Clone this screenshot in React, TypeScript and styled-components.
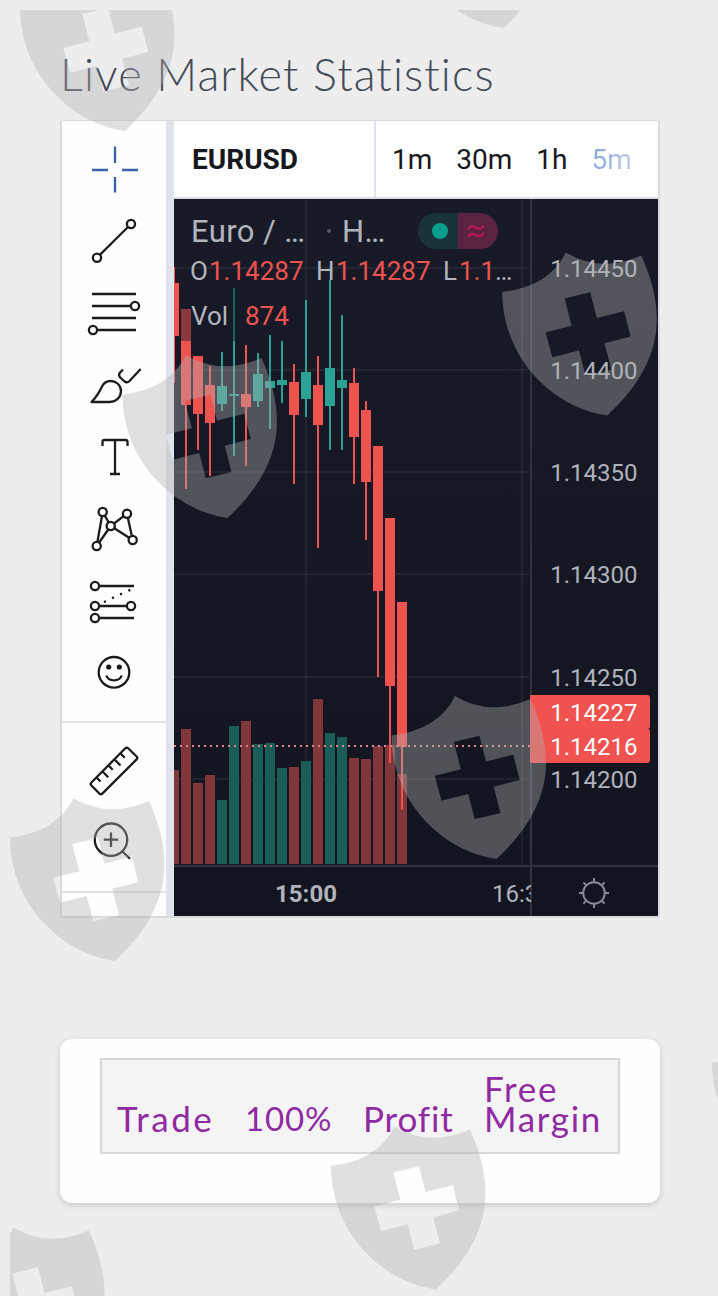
import React from "react";
import styled, { createGlobalStyle } from "styled-components";

const GlobalStyle = createGlobalStyle`
  * { box-sizing: border-box; }
  body {
    margin: 0;
    background: #ededed;
    font-family: Roboto, "Liberation Sans", sans-serif;
    overflow: hidden;
  }
`;

const Page = styled.div`
  position: relative;
  height: 1296px;
  padding: 44px 58px 0 60px;
  overflow: hidden;
`;

const Title = styled.h1`
  margin: 0;
  height: 76px;
  font: 300 45px/60px Lato, "Open Sans", sans-serif;
  letter-spacing: 1.14px;
  color: #444a56;
  white-space: nowrap;
`;

const Widget = styled.section`
  display: flex;
  width: 600px;
  height: 798px;
  border: 2px solid #d9dadc;
  border-top-width: 1.5px;
  border-radius: 3px;
  background: #e0e3eb;
  overflow: hidden;
`;

const Toolbar = styled.nav`
  flex: 0 0 104px;
  margin-right: 8px;
  background: #fefefe;
  display: flex;
  flex-direction: column;
`;

const ToolGroup = styled.div`
  padding: 12px 0 12px 16px;
  border-bottom: 2px solid #e0e2e6;
  display: flex;
  flex-direction: column;
`;

const ToolIcon = styled.svg<{ $active?: boolean }>`
  display: block;
  width: 72px;
  height: 72px;
  fill: none;
  stroke: ${(p) => (p.$active ? "#3a62a8" : "#1b1c20")};
  stroke-width: 2.3;
  stroke-linejoin: round;
`;

const Main = styled.div`
  flex: 1;
  display: flex;
  flex-direction: column;
  background: #fff;
`;

const Header = styled.header`
  display: flex;
  height: 78px;
  border-bottom: 2px solid #dcdee3;
  font-size: 28px;
  line-height: 78px;
  color: #16181e;
`;

const SymbolName = styled.div`
  width: 202px;
  padding-left: 18px;
  border-right: 2px solid #e0e3eb;
  font-weight: 700;
`;

const Intervals = styled.div`
  display: flex;
  gap: 24px;
  padding-left: 16px;
`;

const Interval = styled.span<{ $active?: boolean }>`
  ${(p) =>
    p.$active &&
    `background: linear-gradient(90deg, #86a6da, #c3cbe6);
     background-clip: text;
     -webkit-background-clip: text;
     color: transparent;`}
`;

const ChartArea = styled.div`
  position: relative;
  flex: 1;
  background: linear-gradient(#181b27, #12151f);
`;

const ChartSvg = styled.svg`
  display: block;
  width: 484px;
  height: 718px;
  font-family: Roboto, "Liberation Sans", sans-serif;
  font-size: 24px;
`;

const Legend = styled.div`
  position: absolute;
  left: 16px;
  top: 12px;
  color: #b2b5be;
  white-space: pre;
`;

const InstrumentRow = styled.div`
  display: grid;
  grid-template-columns: 136px 15px 76px 80px;
  align-items: center;
  height: 40px;
  padding-left: 1px;
  font-size: 31px;
  letter-spacing: 0.4px;
`;

const Separator = styled.span`
  width: 4px;
  height: 4px;
  border-radius: 50%;
  background: #555862;
`;

const Status = styled.div`
  display: flex;
  height: 36px;
  border-radius: 18px;
  overflow: hidden;
  background: linear-gradient(90deg, #1a3338 50%, #592440 50%);
`;

const OhlcRow = styled.div`
  display: grid;
  grid-template-columns: 19px 107px 20px 107px 16px 60px;
  height: 38px;
  line-height: 40px;
  font-size: 26px;
`;

const VolumeRow = styled.div`
  display: grid;
  grid-template-columns: 54px 60px;
  margin-top: 7px;
  padding-left: 1px;
  height: 38px;
  line-height: 40px;
  font-size: 26px;
`;

const Down = styled.span`
  color: #ee5350;
`;
const Muted = styled.span`
  color: #b2b5be;
`;

const Card = styled.section`
  width: 600px;
  height: 164px;
  margin-top: 121px;
  padding: 19px 40px;
  border-radius: 12px;
  background: #fefefe;
  box-shadow: 0 2px 6px rgba(0, 0, 0, 0.16);
`;

const StatsHead = styled.div`
  display: grid;
  grid-template-columns: 128px 118px 121px 149px;
  align-items: end;
  height: 96px;
  padding-bottom: 19px;
  border: 2px solid #d8d8d8;
  background: #f4f4f4;
`;

const StatCell = styled.div<{ $spacing?: number; $size?: number }>`
  padding-left: 15px;
  font: 400 ${(p) => p.$size ?? 35}px/30px Lato, "Open Sans", sans-serif;
  letter-spacing: ${(p) => p.$spacing ?? 0}px;
  color: #8f2aa2;
`;

const Watermark = styled.svg`
  position: absolute;
  left: 10px;
  top: 10px;
  width: 708px;
  height: 1286px;
  fill: rgba(177, 177, 177, 0.39);
  fill-rule: evenodd;
  pointer-events: none;
`;

const RED = "#ef5350";
const GREEN = "#2aa294";

// [rising, high, body top, body bottom, low, volume top]
type Candle = [boolean, number, number, number, number, number];
const candles: Candle[] = [
  [false, 267, 283, 336, 383, 770],
  [false, 309, 341, 405, 489, 729],
  [false, 356, 356, 414, 450, 783],
  [false, 366, 385, 423, 476, 775],
  [true, 352, 386, 404, 411, 800],
  [true, 288, 394, 396, 456, 726],
  [false, 345, 394, 407, 466, 721],
  [true, 353, 374, 401, 407, 744],
  [true, 335, 381, 388, 429, 743],
  [true, 341, 380, 385, 403, 768],
  [false, 364, 382, 415, 484, 767],
  [true, 300, 372, 399, 417, 761],
  [false, 356, 385, 425, 548, 699],
  [true, 280, 368, 406, 450, 733],
  [true, 315, 380, 388, 450, 737],
  [false, 368, 383, 437, 484, 758],
  [false, 401, 410, 482, 540, 759],
  [false, 446, 446, 591, 677, 746],
  [false, 518, 518, 686, 763, 745],
  [false, 602, 602, 747, 810, 774],
];

const priceTicks: [string, number][] = [
  ["1.14450", 268],
  ["1.14400", 370],
  ["1.14350", 472],
  ["1.14300", 574],
  ["1.14250", 677],
  ["1.14200", 779],
];

function PriceChart() {
  return (
    <ChartSvg viewBox="174 199 484 718">
      <g fill="rgba(120,124,140,0.13)">
        {priceTicks.map(([, y]) => (
          <rect key={y} x={174} y={y - 1} width={355} height={2} />
        ))}
        <rect x={305} y={199} width={2} height={666} />
        <rect x={521} y={199} width={2} height={666} />
      </g>
      {candles.map(([up, , , , , v], i) => (
        <rect key={i} x={169 + 12 * i} y={v} width={10} height={864 - v} fill={up ? "#1c5c56" : "#80373c"} />
      ))}
      {candles.map(([up, high, top, bottom, low], i) => (
        <g key={i} fill={up ? GREEN : RED}>
          <rect x={173 + 12 * i} y={high} width={2} height={low - high} />
          <rect x={169 + 12 * i} y={top} width={10} height={bottom - top} />
        </g>
      ))}
      <rect x={181} y={309} width={10} height={32} fill="#8c393e" />
      <rect x={233} y={288} width={2} height={53} fill="#1c655f" />
      <path d="M174 746H530" stroke="#e0868a" strokeWidth="2" strokeDasharray="2 4" />
      <g fill="#30333e">
        <rect x={530} y={199} width={2} height={718} />
        <rect x={174} y={865} width={484} height={2} />
      </g>
      <g fill="#b0b3bc">
        {priceTicks.map(([label, y]) => (
          <text key={label} x={637.5} y={y + 9} textAnchor="end">
            {label}
          </text>
        ))}
        <text x={306} y={902} textAnchor="middle" fontWeight={700}>
          15:00
        </text>
        <svg x={480} y={870} width={51} height={44}>
          <text x={12} y={32}>
            16:30
          </text>
        </svg>
      </g>
      <path d="M530 695h117q3 0 3 3v28q0 3-2 3q2 0 2 3v28q0 3-3 3H530z" fill="#f0524f" />
      <g fill="#fff">
        <text x={637.5} y={721} textAnchor="end">
          1.14227
        </text>
        <text x={637.5} y={755} textAnchor="end">
          1.14216
        </text>
      </g>
      <g transform="translate(594 893)" stroke="#868993" strokeWidth="2" fill="none">
        <circle r={10.8} />
        {[0, 45, 90, 135, 180, 225, 270, 315].map((a) => (
          <path key={a} d="M0 -11V-15" transform={`rotate(${a})`} />
        ))}
      </g>
    </ChartSvg>
  );
}

function Knobs({ at }: { at: [number, number][] }) {
  return (
    <>
      {at.map(([x, y]) => (
        <circle key={`${x}-${y}`} cx={x} cy={y} r={4.1} fill="#fefefe" />
      ))}
    </>
  );
}

function DrawingTools() {
  return (
    <Toolbar>
      <ToolGroup>
        <ToolIcon $active viewBox="0 0 72 72">
          <path d="M37 13.5V30M37 44V59.5M14 37H30M44 37H60" />
        </ToolIcon>
        <ToolIcon viewBox="0 0 72 72">
          <path d="M19 52.7L53 19" />
          <Knobs at={[[19, 52.7], [53, 19]]} />
        </ToolIcon>
        <ToolIcon viewBox="0 0 72 72">
          <path d="M14 17H58M14 29H58M14 41H58M14 53H58" />
          <Knobs at={[[57, 29], [15, 53]]} />
        </ToolIcon>
        <ToolIcon viewBox="0 0 72 72">
          <path d="M13.5 53H32C38 53 43 48 43 42C43 36 38 32 32.5 32C28 32 25.5 34.5 24 37.5C20.5 45 18 48.5 13.5 53Z" />
          <path d="M45 20.7L42 23.5Q40 26 42.2 28.5L46 32Q49 34.5 51.5 32L62.7 20" />
        </ToolIcon>
        <ToolIcon viewBox="0 0 72 72">
          <path d="M24.5 25V21Q24.5 19 26.5 19H47.5Q49.5 19 49.5 21V25M37 19V53M32 53H42" />
        </ToolIcon>
        <ToolIcon viewBox="0 0 72 72">
          <path d="M24.7 19L18.7 53L32.7 33ZM32.7 33L49 20.7L54.7 47Z" />
          <Knobs at={[[24.7, 19], [49, 20.7], [32.7, 33], [18.7, 53], [54.7, 47]]} />
        </ToolIcon>
        <ToolIcon viewBox="0 0 72 72">
          <path d="M17 21H56M17 41H53M17 53H56" />
          <path d="M26 37L28 36.2M34 33.2L36 32.3M42 29.5L44 28.6M50.3 25.8L52.3 24.9" />
          <Knobs at={[[17, 21], [17, 41], [53, 41], [17, 53]]} />
        </ToolIcon>
        <ToolIcon viewBox="0 0 72 72">
          <circle cx="36" cy="35.3" r="15.3" />
          <path d="M28.3 38.5C30.5 45 41.5 45 43.7 38.5" />
          <g fill="#1b1c20" stroke="none">
            <circle cx="30.7" cy="30" r="2.6" />
            <circle cx="41.3" cy="30" r="2.6" />
          </g>
        </ToolIcon>
      </ToolGroup>
      <ToolGroup>
        <ToolIcon viewBox="0 0 72 72">
          <path d="M47.3 13.3Q48.8 12 50.2 13.3L58.6 21.5Q60 23 58.6 24.4L24.3 58.6Q23 60 21.5 58.6L13.4 50.5Q12 49 13.4 47.5Z" />
          <path d="M18.3 42.3L22.5 46.5M24.3 36.3L30.2 42.2M30.3 30.3L34.7 34.7M36.3 24.3L42.5 30.5M42.3 18.3L46.7 22.7" />
        </ToolIcon>
        <ToolIcon viewBox="0 0 72 72">
          <circle cx="33" cy="32.7" r="16.2" />
          <path d="M33 25.5V40M25.8 32.7H40.2M44.3 44.3L52 51.8" />
        </ToolIcon>
      </ToolGroup>
    </Toolbar>
  );
}

const SHIELD =
  "M0 39.5Q47 34 63.5 0Q98 21 139 3C164.5 60 162 110 105 163C50 155 0 105 0 39.5Z" +
  "M43.3 79.7L69.3 73.2L62.3 46L88 39.7L94.5 65.5L121.8 58.8L128.3 84L102.2 90.7L109 117L83.3 123.3L76.7 98L50 104.7Z";

const shields: [number, number][] = [
  [20, -32],
  [398.5, -135],
  [502.3, 252.5],
  [122.5, 355],
  [391.5, 696],
  [10, 798],
  [331, 1126.5],
  [-50, 1227.5],
  [712, 1023],
];

export default function App() {
  return (
    <>
      <GlobalStyle />
      <Page>
        <Title>Live Market Statistics</Title>
        <Widget>
          <DrawingTools />
          <Main>
            <Header>
              <SymbolName>EURUSD</SymbolName>
              <Intervals>
                <Interval>1m</Interval>
                <Interval>30m</Interval>
                <Interval>1h</Interval>
                <Interval $active>5m</Interval>
              </Intervals>
            </Header>
            <ChartArea>
              <PriceChart />
              <Legend>
                <InstrumentRow>
                  <span>Euro / …</span>
                  <Separator />
                  <span>H…</span>
                  <Status>
                    <svg width="80" height="36" viewBox="0 0 80 36" fill="none">
                      <circle cx="22" cy="18" r="8" fill="#0a9f8c" />
                      <path
                        d="M50.5 16.5C52 12.5 55 13 58 14.8S64 16 65.5 12.5M50.5 24C52 20 55 20.5 58 22.3S64 23.5 65.5 20"
                        stroke="#b3184f"
                        strokeWidth="2.4"
                      />
                    </svg>
                  </Status>
                </InstrumentRow>
                <OhlcRow>
                  <span>O</span>
                  <Down>1.14287</Down>
                  <span>H</span>
                  <Down>1.14287</Down>
                  <span>L</span>
                  <Down>
                    1.1<Muted>…</Muted>
                  </Down>
                </OhlcRow>
                <VolumeRow>
                  <span>Vol</span>
                  <Down>874</Down>
                </VolumeRow>
              </Legend>
            </ChartArea>
          </Main>
        </Widget>
        <Card>
          <StatsHead>
            <StatCell $spacing={2.5}>Trade</StatCell>
            <StatCell $size={33} $spacing={0.9}>100%</StatCell>
            <StatCell $spacing={0.9}>Profit</StatCell>
            <StatCell $spacing={1.7}>Free Margin</StatCell>
          </StatsHead>
        </Card>
        <Watermark viewBox="10 10 708 1286">
          {shields.map(([x, y]) => (
            <path key={`${x},${y}`} d={SHIELD} transform={`translate(${x} ${y})`} />
          ))}
        </Watermark>
      </Page>
    </>
  );
}
